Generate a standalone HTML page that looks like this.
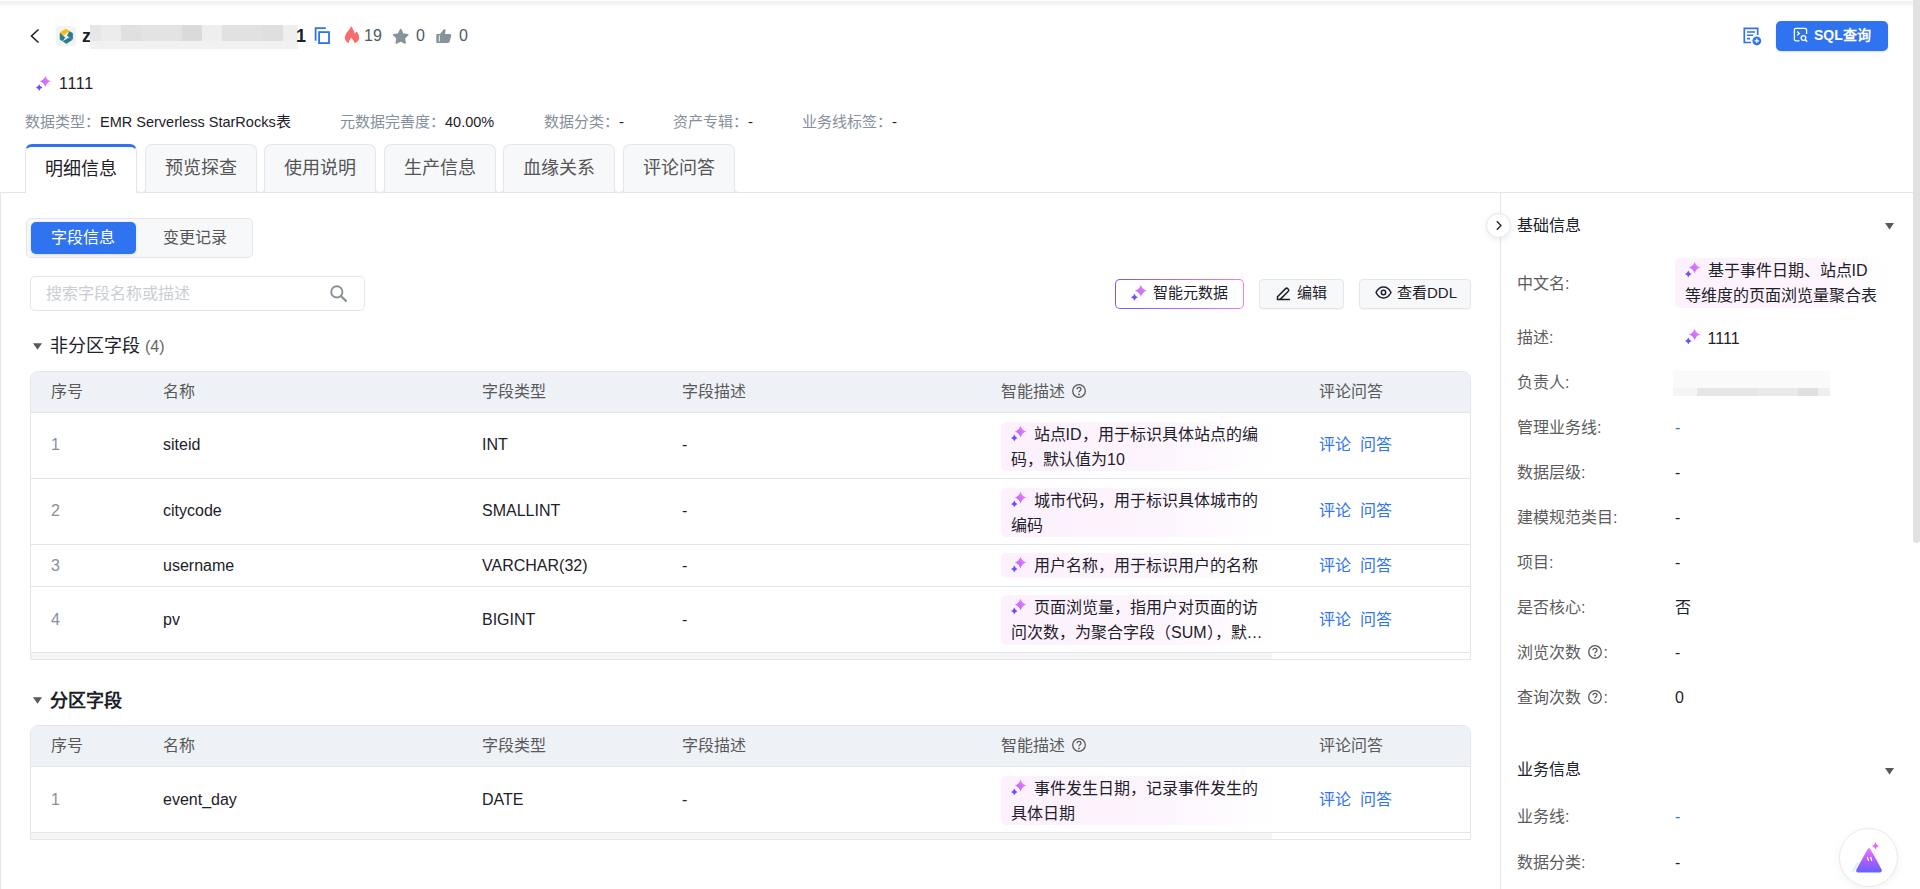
<!DOCTYPE html>
<html lang="zh-CN"><head><meta charset="utf-8">
<style>
*{box-sizing:border-box;margin:0;padding:0}
html,body{width:1920px;height:889px;overflow:hidden;background:#fff}
body{position:relative;font-family:"Liberation Sans",sans-serif;color:#1d2129;font-size:16px}
.a{position:absolute}
.t{position:absolute;white-space:nowrap;line-height:20px}
svg{display:block}
.sec{color:#86909c}
.pri{color:#1d2129}
.blue{color:#2f73f0}
/* tabs */
.tab{position:absolute;top:144px;height:48px;width:112px;background:#f7f8fa;border:1px solid #e5e6eb;border-bottom:none;border-radius:7px 7px 0 0;color:#555;font-size:18px;line-height:47px;text-align:center}
.tab.on{background:#fff;color:#1d2129;border-top:3px solid #2f73f0;line-height:45px;z-index:2;height:49px}
.btn{position:absolute;top:279px;height:30px;border:1px solid #e5e6eb;background:#f7f8fa;border-radius:4px;font-size:15px;line-height:28px;color:#1d2129;box-shadow:0 1px 1px rgba(0,0,0,.04)}
.tbl{position:absolute;left:30px;width:1441px;border:1px solid #e5e6eb;border-radius:8px 8px 0 0;overflow:hidden}
.th{position:absolute;left:0;top:0;width:100%;height:41px;background:#eef1f6;border-bottom:1px solid #e5e6eb}
.rowb{position:absolute;left:0;width:100%;height:1px;background:#e5e6eb}
.hc{position:absolute;top:10px;color:#595959;line-height:20px;white-space:nowrap}
.cell{position:absolute;white-space:nowrap;line-height:20px}
.ai{position:absolute;left:970px;width:272px;border-radius:5px;background:linear-gradient(90deg,#fcf1fd 0%,#fdf5fe 60%,#fff 100%);padding:0 10px;line-height:25px;font-size:16px;color:#1d2129;white-space:normal}
.spk{display:inline-block;vertical-align:-2px;margin-left:-1px;margin-right:6px}
.lnk{position:absolute;left:1288px;color:#2f73f0;white-space:nowrap;line-height:20px;word-spacing:0}
.lbl{position:absolute;left:1517px;color:#5c5c5c;white-space:nowrap;line-height:20px}
.val{position:absolute;left:1675px;white-space:nowrap;line-height:20px;color:#1d2129}
</style></head><body>

<!-- top shadow -->
<div class="a" style="left:0;top:0;width:1913px;height:9px;background:linear-gradient(#fff 0px,#fdfdfd 0.8px,#efefef 1.7px,#f3f3f3 3px,#f9f9f9 5px,#fdfdfd 7px,#fff 9px)"></div>
<!-- page scrollbar -->
<div class="a" style="left:1913px;top:0;width:7px;height:543px;background:#e1e1e1;border-radius:0 0 4px 4px"></div>

<!-- HEADER -->
<svg class="a" style="left:28px;top:27px" width="14" height="18" viewBox="0 0 14 18"><path d="M10.5 2.5 L3.5 9 L10.5 15.5" fill="none" stroke="#1d2129" stroke-width="1.6"/></svg>
<div class="a" style="left:56px;top:26px;width:20px;height:20px;background:#f2f3f5;border-radius:3px"></div>
<svg class="a" style="left:59px;top:28px" width="16" height="18" viewBox="0 0 16 18"><g stroke-linejoin="round" stroke-width="0.7"><path d="M1.2 4.5 L6.5 1.2 L10.1 3 L4.7 6.9Z" fill="#f7bd00" stroke="#f7bd00"/><path d="M1.1 5.3 L5.9 9.4 L3.7 12.8 L1.1 11.6Z" fill="#2a7c8c" stroke="#2a7c8c"/><path d="M10.4 3.6 L13.6 5.3 L13.6 11.1 L8.4 7.7Z" fill="#2a7c8c" stroke="#2a7c8c"/><path d="M4.2 13.3 L10.5 9.6 L13.2 11.7 L7.3 15.5Z" fill="#2a7c8c" stroke="#2a7c8c"/></g></svg>
<div class="t" style="left:82px;top:26px;font-size:18px;font-weight:bold;line-height:20px">z</div>
<!-- blurred name -->
<div class="a" style="left:90px;top:25px;width:208px;height:24px;background:#f1f1f1"></div>
<div class="a" style="left:90px;top:25px;width:10.5px;height:15.5px;background:#e6e6e6"></div>
<div class="a" style="left:100.5px;top:25px;width:20.5px;height:15.5px;background:#ececec"></div>
<div class="a" style="left:121px;top:25px;width:19.5px;height:15.5px;background:#e0e0e0"></div>
<div class="a" style="left:140.5px;top:25px;width:17.5px;height:15.5px;background:#e2e3e3"></div>
<div class="a" style="left:158px;top:25px;width:24px;height:15.5px;background:#e3e3e3"></div>
<div class="a" style="left:182px;top:25px;width:20px;height:15.5px;background:#dadada"></div>
<div class="a" style="left:202px;top:25px;width:20px;height:15.5px;background:#eeeeee"></div>
<div class="a" style="left:222px;top:25px;width:40px;height:15.5px;background:#e1e1e1"></div>
<div class="a" style="left:262px;top:25px;width:21px;height:15.5px;background:#dfdfdf"></div>
<div class="a" style="left:283px;top:25px;width:15px;height:15.5px;background:#efefef"></div>
<div class="t" style="left:296px;top:26px;font-size:18px;font-weight:bold">1</div>
<svg class="a" style="left:314px;top:27px" width="17" height="18" viewBox="0 0 17 18"><path d="M1.6 13.7 V1.1 H11.8" fill="none" stroke="#2f73f0" stroke-width="1.8"/><rect x="5.1" y="5.1" width="9.9" height="11" fill="none" stroke="#2f73f0" stroke-width="1.8"/></svg>
<svg class="a" style="left:344px;top:25px" width="16" height="19" viewBox="0 0 16 19"><path d="M7.2 1.1 C8.4 3.4 10 5.8 10.8 8.7 C11.3 7.9 11.9 7.2 12.5 6.6 C14.3 8.5 15.2 10.8 15.1 13.2 C15 15.6 13 17.4 10.2 18 C10.6 16 8.4 14.6 7.2 12.5 C6 14.6 4.4 16.2 5.2 18 C2.5 17.2 0.7 15 0.8 12.4 C0.9 9.4 2.8 7.4 4.4 5.4 C5.6 4 6.8 2.6 7.2 1.1Z" fill="#fb6b6b"/></svg>
<div class="t sec" style="left:364px;top:26px;font-size:16px;color:#4e5969">19</div>
<svg class="a" style="left:392px;top:28px" width="17" height="17" viewBox="0 0 17 17"><path d="M8.7 1.6 L10.9 6 L15.8 6.7 L12.3 10.1 L13.1 15 L8.7 12.7 L4.3 15 L5.1 10.1 L1.6 6.7 L6.5 6Z" fill="#85939a" stroke="#85939a" stroke-width="1.6" stroke-linejoin="round"/></svg>
<div class="t" style="left:416px;top:26px;font-size:16px;color:#4e5969">0</div>
<svg class="a" style="left:435px;top:28px" width="17" height="16" viewBox="0 0 17 16"><path d="M2.3 6 H5 L8.6 1.6 C9.2 0.9 10.6 1.2 10.6 2.4 L10 6 H14.8 C15.8 6 16.5 6.9 16.2 7.9 L14.6 13.8 C14.4 14.5 13.8 14.9 13.1 14.9 H2.3 C1.7 14.9 1.3 14.5 1.3 13.9 V7 C1.3 6.4 1.7 6 2.3 6Z" fill="#85939a"/><path d="M4.3 7.4 V13.6" stroke="#fff" stroke-width="0.9"/></svg>
<div class="t" style="left:459px;top:26px;font-size:16px;color:#4e5969">0</div>

<!-- right header -->
<svg class="a" style="left:1742px;top:26px" width="20" height="20" viewBox="0 0 20 20"><path d="M9 16.5 H2.3 V2.3 H15.7 V9" fill="none" stroke="#2f73f0" stroke-width="1.7"/><path d="M5 6 H13 M5 9.3 H11 M5 12.6 H8" stroke="#2f73f0" stroke-width="1.6"/><circle cx="14.8" cy="14.8" r="4.4" fill="#2f73f0"/><path d="M14.8 12.5 V17.1 M12.5 14.8 H17.1" stroke="#fff" stroke-width="1.2"/></svg>
<div class="a" style="left:1776px;top:21px;width:112px;height:30px;background:#2f73f0;border-radius:5px;box-shadow:0 1px 2px rgba(0,0,0,.15)"></div>
<svg class="a" style="left:1793px;top:27px" width="16" height="16" viewBox="0 0 16 16"><path d="M6.5 13.8 H3 C2 13.8 1.4 13.2 1.4 12.2 V3 C1.4 2 2 1.4 3 1.4 H12 C13 1.4 13.6 2 13.6 3 V7" fill="none" stroke="#fff" stroke-width="1.3"/><path d="M4.2 4.5 L6.3 6.4 L4.2 8.3" fill="none" stroke="#fff" stroke-width="1.2"/><circle cx="10.5" cy="11" r="2.3" fill="none" stroke="#fff" stroke-width="1.3"/><path d="M12.2 12.8 L14.2 14.8" stroke="#fff" stroke-width="1.4"/></svg>
<div class="t" style="left:1814px;top:25px;font-size:14px;font-weight:bold;color:#fff">SQL查询</div>

<!-- row 2 -->
<svg class="a" style="left:35px;top:75px" width="17" height="17" viewBox="0 0 17 17"><defs><linearGradient id="sp" x1="0" y1="1" x2="1" y2="0"><stop offset="0" stop-color="#b45cff"/><stop offset="1" stop-color="#f585ff"/></linearGradient></defs><path d="M10.3 0.7000000000000002 Q11.532 5.068 15.9 6.3 Q11.532 7.532 10.3 11.899999999999999 Q9.068000000000001 7.532 4.700000000000001 6.3 Q9.068000000000001 5.068 10.3 0.7000000000000002Z" fill="url(#sp)"/><path d="M4.2 9.3 Q4.926 11.873999999999999 7.5 12.6 Q4.926 13.326 4.2 15.899999999999999 Q3.474 13.326 0.9000000000000004 12.6 Q3.474 11.873999999999999 4.2 9.3Z" fill="#6d4dff"/></svg>
<div class="t" style="left:59px;top:74px;font-size:16px;letter-spacing:0.7px">1111</div>

<!-- meta row -->
<div class="t" style="left:25px;top:112px;font-size:15px"><span class="sec">数据类型：</span><span style="font-size:14.5px">EMR Serverless StarRocks</span>表</div>
<div class="t" style="left:340px;top:112px;font-size:15px"><span class="sec">元数据完善度：</span><span style="font-size:14.5px">40.00%</span></div>
<div class="t" style="left:544px;top:112px;font-size:15px"><span class="sec">数据分类：</span>-</div>
<div class="t" style="left:673px;top:112px;font-size:15px"><span class="sec">资产专辑：</span>-</div>
<div class="t" style="left:802px;top:112px;font-size:15px"><span class="sec">业务线标签：</span>-</div>

<!-- tabs -->
<div class="a" style="left:0;top:192px;width:1913px;height:1px;background:#e5e6eb"></div>
<div class="tab on" style="left:25px">明细信息</div>
<div class="tab" style="left:145px">预览探查</div>
<div class="tab" style="left:264px">使用说明</div>
<div class="tab" style="left:384px">生产信息</div>
<div class="tab" style="left:503px">血缘关系</div>
<div class="tab" style="left:623px">评论问答</div>
<div class="a" style="left:136px;top:172px;width:10px;height:21px;border:1px solid #e5e6eb;border-top:none;border-radius:0 0 5px 5px;background:#fff;z-index:3"></div>
<div class="a" style="left:256px;top:172px;width:9px;height:21px;border:1px solid #e5e6eb;border-top:none;border-radius:0 0 5px 5px;background:#fff;z-index:3"></div>
<div class="a" style="left:375px;top:172px;width:10px;height:21px;border:1px solid #e5e6eb;border-top:none;border-radius:0 0 5px 5px;background:#fff;z-index:3"></div>
<div class="a" style="left:495px;top:172px;width:9px;height:21px;border:1px solid #e5e6eb;border-top:none;border-radius:0 0 5px 5px;background:#fff;z-index:3"></div>
<div class="a" style="left:614px;top:172px;width:10px;height:21px;border:1px solid #e5e6eb;border-top:none;border-radius:0 0 5px 5px;background:#fff;z-index:3"></div>
<div class="a" style="left:734px;top:172px;width:9px;height:21px;border-left:1px solid #e5e6eb;border-bottom:1px solid #e5e6eb;border-radius:0 0 0 5px;background:#fff;z-index:3"></div>

<!-- CONTENT_LEFT -->
<div class="a" style="left:0;top:193px;width:1px;height:696px;background:#e5e6eb"></div>
<!-- segmented -->
<div class="a" style="left:26px;top:218px;width:227px;height:40px;background:#f7f8fa;border:1px solid #e5e6eb;border-radius:5px"></div>
<div class="a" style="left:31px;top:222px;width:105px;height:32px;background:#2f73f0;border-radius:5px;box-shadow:0 1px 3px rgba(0,0,0,.12)"></div>
<div class="t" style="left:51px;top:228px;color:#fff">字段信息</div>
<div class="t" style="left:163px;top:228px;color:#555">变更记录</div>
<!-- search -->
<div class="a" style="left:30px;top:276px;width:335px;height:35px;border:1px solid #e5e6eb;border-radius:5px;background:#fff"></div>
<div class="t" style="left:46px;top:284px;color:#c9cdd4">搜索字段名称或描述</div>
<svg class="a" style="left:329px;top:284px" width="20" height="20" viewBox="0 0 20 20"><circle cx="7.8" cy="7.9" r="5.6" fill="none" stroke="#86909c" stroke-width="1.9"/><path d="M12 12.2 L17.6 17.4" stroke="#86909c" stroke-width="2.2"/></svg>
<!-- buttons -->
<div class="a" style="left:1115px;top:279px;width:129px;height:30px;border-radius:5px;background:linear-gradient(90deg,#7657ff,#e87dff);padding:1px"><div style="width:100%;height:100%;background:#fff;border-radius:4px"></div></div>
<svg class="a" style="left:1130px;top:284px" width="18" height="18" viewBox="0 0 17 17"><path d="M10.3 0.7000000000000002 Q11.532 5.068 15.9 6.3 Q11.532 7.532 10.3 11.899999999999999 Q9.068000000000001 7.532 4.700000000000001 6.3 Q9.068000000000001 5.068 10.3 0.7000000000000002Z" fill="url(#sp)"/><path d="M4.2 9.3 Q4.926 11.873999999999999 7.5 12.6 Q4.926 13.326 4.2 15.899999999999999 Q3.474 13.326 0.9000000000000004 12.6 Q3.474 11.873999999999999 4.2 9.3Z" fill="#6d4dff"/></svg>
<div class="t" style="left:1153px;top:283px;font-size:15px">智能元数据</div>
<div class="btn" style="left:1259px;width:85px"></div>
<svg class="a" style="left:1275px;top:285px" width="17" height="17" viewBox="0 0 17 17"><path d="M2.5 14.6 V11.8 L10.6 3.6 C11.2 3 12 3 12.6 3.6 L13.3 4.3 C13.9 4.9 13.9 5.7 13.3 6.3 L5.2 14.4 Z M2.5 14.6 H15" fill="none" stroke="#1d2129" stroke-width="1.5" stroke-linejoin="round"/></svg>
<div class="t" style="left:1297px;top:283px;font-size:15px">编辑</div>
<div class="btn" style="left:1359px;width:112px"></div>
<svg class="a" style="left:1375px;top:285px" width="17" height="15" viewBox="0 0 17 15"><path d="M1 7.5 C3 3.5 5.5 2 8.5 2 C11.5 2 14 3.5 16 7.5 C14 11.5 11.5 13 8.5 13 C5.5 13 3 11.5 1 7.5Z" fill="none" stroke="#1d2129" stroke-width="1.5"/><circle cx="8.5" cy="7.5" r="2.2" fill="none" stroke="#1d2129" stroke-width="1.5"/></svg>
<div class="t" style="left:1397px;top:283px;font-size:15px">查看DDL</div>

<!-- section 1 -->
<svg class="a" style="left:32px;top:342px" width="11" height="9" viewBox="0 0 11 9"><path d="M1 1.2 H10 L5.5 7.8Z" fill="#595959"/></svg>
<div class="t" style="left:50px;top:336px;font-size:18px">非分区字段 <span style="color:#666;font-size:16px">(4)</span></div>
<div class="tbl" style="top:371px;height:289px">
  <div class="th"></div>
  <div class="hc" style="left:20px">序号</div>
  <div class="hc" style="left:132px">名称</div>
  <div class="hc" style="left:451px">字段类型</div>
  <div class="hc" style="left:651px">字段描述</div>
  <div class="hc" style="left:970px">智能描述 <svg style="display:inline-block;vertical-align:-2px;margin-left:2px" width="16" height="16" viewBox="0 0 16 16"><circle cx="8" cy="8" r="6.3" fill="none" stroke="#595959" stroke-width="1.3"/><path d="M6 6.3 C6 5 7 4.4 8 4.4 C9.1 4.4 10 5.1 10 6.2 C10 7.6 8 7.7 8 9.3" fill="none" stroke="#595959" stroke-width="1.3"/><circle cx="8" cy="11.4" r=".9" fill="#595959"/></svg></div>
  <div class="hc" style="left:1288px">评论问答</div>

  <div class="rowb" style="top:106px"></div>
  <div class="rowb" style="top:172px"></div>
  <div class="rowb" style="top:214px"></div>
  <div class="rowb" style="top:280px"></div>
  <div class="a" style="left:0;top:281px;width:1241px;height:6px;background:#f5f5f5"></div>

  <div class="cell sec" style="left:20px;top:63px">1</div>
  <div class="cell" style="left:132px;top:63px">siteid</div>
  <div class="cell" style="left:451px;top:63px">INT</div>
  <div class="cell" style="left:651px;top:63px">-</div>
  <div class="ai" style="top:50px;height:49px"><svg class="spk" width="17.5" height="17.5" viewBox="0 0 17 17"><path d="M10.3 0.7000000000000002 Q11.532 5.068 15.9 6.3 Q11.532 7.532 10.3 11.899999999999999 Q9.068000000000001 7.532 4.700000000000001 6.3 Q9.068000000000001 5.068 10.3 0.7000000000000002Z" fill="url(#sp)"/><path d="M4.2 9.3 Q4.926 11.873999999999999 7.5 12.6 Q4.926 13.326 4.2 15.899999999999999 Q3.474 13.326 0.9000000000000004 12.6 Q3.474 11.873999999999999 4.2 9.3Z" fill="#6d4dff"/></svg>站点ID，用于标识具体站点的编码，默认值为10</div>
  <div class="lnk" style="top:63px">评论&nbsp;&nbsp;问答</div>

  <div class="cell sec" style="left:20px;top:129px">2</div>
  <div class="cell" style="left:132px;top:129px">citycode</div>
  <div class="cell" style="left:451px;top:129px">SMALLINT</div>
  <div class="cell" style="left:651px;top:129px">-</div>
  <div class="ai" style="top:116px;height:49px"><svg class="spk" width="17.5" height="17.5" viewBox="0 0 17 17"><path d="M10.3 0.7000000000000002 Q11.532 5.068 15.9 6.3 Q11.532 7.532 10.3 11.899999999999999 Q9.068000000000001 7.532 4.700000000000001 6.3 Q9.068000000000001 5.068 10.3 0.7000000000000002Z" fill="url(#sp)"/><path d="M4.2 9.3 Q4.926 11.873999999999999 7.5 12.6 Q4.926 13.326 4.2 15.899999999999999 Q3.474 13.326 0.9000000000000004 12.6 Q3.474 11.873999999999999 4.2 9.3Z" fill="#6d4dff"/></svg>城市代码，用于标识具体城市的编码</div>
  <div class="lnk" style="top:129px">评论&nbsp;&nbsp;问答</div>

  <div class="cell sec" style="left:20px;top:184px">3</div>
  <div class="cell" style="left:132px;top:184px">username</div>
  <div class="cell" style="left:451px;top:184px">VARCHAR(32)</div>
  <div class="cell" style="left:651px;top:184px">-</div>
  <div class="ai" style="top:181px;height:25px;padding-top:0">
<svg class="spk" width="17.5" height="17.5" viewBox="0 0 17 17"><path d="M10.3 0.7000000000000002 Q11.532 5.068 15.9 6.3 Q11.532 7.532 10.3 11.899999999999999 Q9.068000000000001 7.532 4.700000000000001 6.3 Q9.068000000000001 5.068 10.3 0.7000000000000002Z" fill="url(#sp)"/><path d="M4.2 9.3 Q4.926 11.873999999999999 7.5 12.6 Q4.926 13.326 4.2 15.899999999999999 Q3.474 13.326 0.9000000000000004 12.6 Q3.474 11.873999999999999 4.2 9.3Z" fill="#6d4dff"/></svg>用户名称，用于标识用户的名称</div>
  <div class="lnk" style="top:184px">评论&nbsp;&nbsp;问答</div>

  <div class="cell sec" style="left:20px;top:238px">4</div>
  <div class="cell" style="left:132px;top:238px">pv</div>
  <div class="cell" style="left:451px;top:238px">BIGINT</div>
  <div class="cell" style="left:651px;top:238px">-</div>
  <div class="ai" style="top:223px;height:50px;white-space:nowrap;overflow:hidden"><svg class="spk" width="17.5" height="17.5" viewBox="0 0 17 17"><path d="M10.3 0.7000000000000002 Q11.532 5.068 15.9 6.3 Q11.532 7.532 10.3 11.899999999999999 Q9.068000000000001 7.532 4.700000000000001 6.3 Q9.068000000000001 5.068 10.3 0.7000000000000002Z" fill="url(#sp)"/><path d="M4.2 9.3 Q4.926 11.873999999999999 7.5 12.6 Q4.926 13.326 4.2 15.899999999999999 Q3.474 13.326 0.9000000000000004 12.6 Q3.474 11.873999999999999 4.2 9.3Z" fill="#6d4dff"/></svg>页面浏览量，指用户对页面的访<br>问次数，为聚合字段（SUM），默…</div>
  <div class="lnk" style="top:238px">评论&nbsp;&nbsp;问答</div>
</div>

<!-- section 2 -->
<svg class="a" style="left:32px;top:696px" width="11" height="9" viewBox="0 0 11 9"><path d="M1 1.2 H10 L5.5 7.8Z" fill="#595959"/></svg>
<div class="t" style="left:50px;top:691px;font-size:18px;font-weight:bold">分区字段</div>
<div class="tbl" style="top:725px;height:115px">
  <div class="th"></div>
  <div class="hc" style="left:20px">序号</div>
  <div class="hc" style="left:132px">名称</div>
  <div class="hc" style="left:451px">字段类型</div>
  <div class="hc" style="left:651px">字段描述</div>
  <div class="hc" style="left:970px">智能描述 <svg style="display:inline-block;vertical-align:-2px;margin-left:2px" width="16" height="16" viewBox="0 0 16 16"><circle cx="8" cy="8" r="6.3" fill="none" stroke="#595959" stroke-width="1.3"/><path d="M6 6.3 C6 5 7 4.4 8 4.4 C9.1 4.4 10 5.1 10 6.2 C10 7.6 8 7.7 8 9.3" fill="none" stroke="#595959" stroke-width="1.3"/><circle cx="8" cy="11.4" r=".9" fill="#595959"/></svg></div>
  <div class="hc" style="left:1288px">评论问答</div>
  <div class="rowb" style="top:106px"></div>
  <div class="a" style="left:0;top:107px;width:1241px;height:6px;background:#f5f5f5"></div>
  <div class="cell sec" style="left:20px;top:64px">1</div>
  <div class="cell" style="left:132px;top:64px">event_day</div>
  <div class="cell" style="left:451px;top:64px">DATE</div>
  <div class="cell" style="left:651px;top:64px">-</div>
  <div class="ai" style="top:50px;height:49px"><svg class="spk" width="17.5" height="17.5" viewBox="0 0 17 17"><path d="M10.3 0.7000000000000002 Q11.532 5.068 15.9 6.3 Q11.532 7.532 10.3 11.899999999999999 Q9.068000000000001 7.532 4.700000000000001 6.3 Q9.068000000000001 5.068 10.3 0.7000000000000002Z" fill="url(#sp)"/><path d="M4.2 9.3 Q4.926 11.873999999999999 7.5 12.6 Q4.926 13.326 4.2 15.899999999999999 Q3.474 13.326 0.9000000000000004 12.6 Q3.474 11.873999999999999 4.2 9.3Z" fill="#6d4dff"/></svg>事件发生日期，记录事件发生的具体日期</div>
  <div class="lnk" style="top:64px">评论&nbsp;&nbsp;问答</div>
</div>

<!-- RIGHT_PANEL -->
<div class="a" style="left:1500px;top:193px;width:1px;height:696px;background:#e5e6eb"></div>
<div class="a" style="left:1486px;top:213px;width:25px;height:25px;border-radius:50%;background:#fff;border:1px solid #e5e6eb;box-shadow:0 2px 6px rgba(0,0,0,.08)"></div>
<svg class="a" style="left:1492px;top:219px" width="13" height="13" viewBox="0 0 13 13"><path d="M4.8 2.2 L9 6.5 L4.8 10.8" fill="none" stroke="#1d2129" stroke-width="1.3"/></svg>
<div class="t" style="left:1517px;top:216px;font-weight:500;color:#1d2129">基础信息</div>
<svg class="a" style="left:1884px;top:222px" width="11" height="9" viewBox="0 0 11 9"><path d="M1 1 H10 L5.5 7.5Z" fill="#595959"/></svg>

<div class="lbl" style="top:274px">中文名:</div>
<div class="a" style="left:1675px;top:258px;width:212px;height:50px;border-radius:5px;background:linear-gradient(90deg,#fcf1fd 0%,#fdf5fe 70%,#fff 100%)"></div>
<div class="a" style="left:1685px;top:258px;line-height:25px;white-space:nowrap"><svg class="spk" width="17.5" height="17.5" viewBox="0 0 17 17"><path d="M10.3 0.7 Q11.532 5.068 15.9 6.3 Q11.532 7.532 10.3 11.9 Q9.068 7.532 4.7 6.3 Q9.068 5.068 10.3 0.7Z" fill="url(#sp)"/><path d="M4.2 9.3 Q4.926 11.874 7.5 12.6 Q4.926 13.326 4.2 15.9 Q3.474 13.326 0.9 12.6 Q3.474 11.874 4.2 9.3Z" fill="#6d4dff"/></svg>基于事件日期、站点ID<br>等维度的页面浏览量聚合表</div>

<div class="lbl" style="top:328px">描述:</div>
<div class="a" style="left:1685px;top:328px;line-height:20px;white-space:nowrap"><svg class="spk" width="17.5" height="17.5" viewBox="0 0 17 17"><path d="M10.3 0.7 Q11.532 5.068 15.9 6.3 Q11.532 7.532 10.3 11.9 Q9.068 7.532 4.7 6.3 Q9.068 5.068 10.3 0.7Z" fill="url(#sp)"/><path d="M4.2 9.3 Q4.926 11.874 7.5 12.6 Q4.926 13.326 4.2 15.9 Q3.474 13.326 0.9 12.6 Q3.474 11.874 4.2 9.3Z" fill="#6d4dff"/></svg>1111</div>

<div class="lbl" style="top:373px">负责人:</div>
<div class="a" style="left:1673px;top:371px;width:157px;height:25px;background:#fafafa"></div>
<div class="a" style="left:1673px;top:387.5px;width:24px;height:8.5px;background:#f5f5f5"></div>
<div class="a" style="left:1697px;top:387.5px;width:61px;height:8.5px;background:#e6e6e6"></div>
<div class="a" style="left:1758px;top:387.5px;width:40px;height:8.5px;background:#e8e9e9"></div>
<div class="a" style="left:1798px;top:387.5px;width:20px;height:8.5px;background:#e0e0e0"></div>
<div class="a" style="left:1818px;top:387.5px;width:12px;height:8.5px;background:#eeeeee"></div>

<div class="lbl" style="top:418px">管理业务线:</div><div class="val" style="top:418px;color:#2f73f0">-</div>
<div class="lbl" style="top:463px">数据层级:</div><div class="val" style="top:463px">-</div>
<div class="lbl" style="top:508px">建模规范类目:</div><div class="val" style="top:508px">-</div>
<div class="lbl" style="top:553px">项目:</div><div class="val" style="top:553px">-</div>
<div class="lbl" style="top:598px">是否核心:</div><div class="val" style="top:598px">否</div>
<div class="lbl" style="top:643px">浏览次数 <svg style="display:inline-block;vertical-align:-2px;margin-left:2px" width="16" height="16" viewBox="0 0 16 16"><circle cx="8" cy="8" r="6.3" fill="none" stroke="#595959" stroke-width="1.3"/><path d="M6 6.3 C6 5 7 4.4 8 4.4 C9.1 4.4 10 5.1 10 6.2 C10 7.6 8 7.7 8 9.3" fill="none" stroke="#595959" stroke-width="1.3"/><circle cx="8" cy="11.4" r=".9" fill="#595959"/></svg>:</div><div class="val" style="top:643px">-</div>
<div class="lbl" style="top:688px">查询次数 <svg style="display:inline-block;vertical-align:-2px;margin-left:2px" width="16" height="16" viewBox="0 0 16 16"><circle cx="8" cy="8" r="6.3" fill="none" stroke="#595959" stroke-width="1.3"/><path d="M6 6.3 C6 5 7 4.4 8 4.4 C9.1 4.4 10 5.1 10 6.2 C10 7.6 8 7.7 8 9.3" fill="none" stroke="#595959" stroke-width="1.3"/><circle cx="8" cy="11.4" r=".9" fill="#595959"/></svg>:</div><div class="val" style="top:688px">0</div>

<div class="t" style="left:1517px;top:760px;font-weight:500;color:#1d2129">业务信息</div>
<svg class="a" style="left:1884px;top:767px" width="11" height="9" viewBox="0 0 11 9"><path d="M1 1 H10 L5.5 7.5Z" fill="#595959"/></svg>
<div class="lbl" style="top:807px">业务线:</div><div class="val" style="top:807px;color:#2f73f0">-</div>
<div class="lbl" style="top:853px">数据分类:</div><div class="val" style="top:853px">-</div>

<!-- floating assistant -->
<div class="a" style="left:1839px;top:828px;width:59px;height:59px;border-radius:50%;background:#fff;border:1px solid #e8eaef;box-shadow:0 2px 8px rgba(0,0,0,.05)"></div>
<svg class="a" style="left:1850px;top:840px" width="38" height="38" viewBox="0 0 38 38"><defs><linearGradient id="mt" x1="0" y1="0" x2="0" y2="1"><stop offset="0" stop-color="#e57bff"/><stop offset=".45" stop-color="#b65bff"/><stop offset="1" stop-color="#6363ff"/></linearGradient></defs><path d="M1.5 31.5 L6.8 22.5 L9.3 22.5 L4 31.5Z" fill="#cdeeff" opacity=".8"/><path d="M22.5 13.5 L25 13.5 L31.5 30.5 L29 30.5Z" fill="#f6d4ff" opacity=".6"/><path d="M17.4 9.4 C18.2 8 19.8 8 20.6 9.4 L31.6 29.6 C32.4 31 31.4 32.6 29.8 32.6 H8.2 C6.6 32.6 5.6 31 6.4 29.6Z" fill="url(#mt)"/><path d="M17.4 17.4 L18.4 20.4 M20.8 17.4 L21.6 20.4" stroke="#fff" stroke-width="1.3" stroke-linecap="round"/><path d="M25.5 2.3 Q26.3 5.1 29.1 5.9 Q26.3 6.7 25.5 9.5 Q24.7 6.7 21.9 5.9 Q24.7 5.1 25.5 2.3Z" fill="#e46bff"/></svg>

</body></html>
